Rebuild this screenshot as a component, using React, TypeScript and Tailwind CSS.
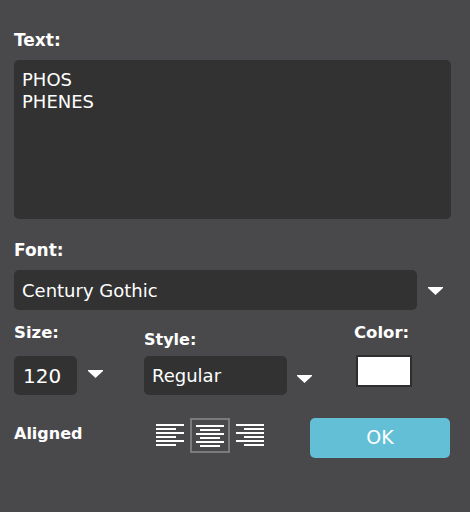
import React from 'react';

// small white dropdown marker used next to selects
function DropArrow() {
  return (
    <svg width="15" height="8" viewBox="0 0 15 8" className="shrink-0">
      <polygon points="0,0 15,0 15,1 7.5,8 0,1" fill="#ffffff" />
    </svg>
  );
}

type Align = 'left' | 'center' | 'right';

function AlignIcon({ align }: { align: Align }) {
  const rows = [0, 1, 2, 3, 4, 5];
  return (
    <svg width="28" height="22" viewBox="0 0 28 22" className="block">
      {rows.map(i => {
        const full = i % 2 === 0;
        const w = full ? 28 : 20;
        const x = full ? 0 : align === 'left' ? 0 : align === 'center' ? 4 : 8;
        return <rect key={i} x={x} y={i * 4} width={w} height={2} fill="#ffffff" />;
      })}
    </svg>
  );
}

export default function App() {
  const label = "font-['DejaVu_Sans',sans-serif] font-bold text-white leading-[20px]";
  const field = "rounded-[5px] bg-[#323232] font-['DejaVu_Sans',sans-serif] text-white";

  return (
    <div className="flex h-[512px] w-[470px] flex-col bg-[#49494b] px-[14px] pt-[30px]">
      <div className={`${label} text-[17px]`}>Text:</div>
      <div className={`${field} mt-[10px] h-[159px] w-[437px] px-[8px] pt-[9px] text-[18px] leading-[22px]`}>
        <div>PHOS</div>
        <div>PHENES</div>
      </div>

      <div className={`${label} mt-[21px] text-[17px]`}>Font:</div>
      <div className="mt-[10px] flex items-center gap-[11px]">
        <div className={`${field} flex h-[40px] w-[403px] items-center px-[8px] text-[18px]`}>Century Gothic</div>
        <div className="mt-[2px]">
          <DropArrow />
        </div>
      </div>

      <div className="mt-[13px] flex">
        <div className="flex w-[130px] flex-col">
          <div className={`${label} text-[16.5px]`}>Size:</div>
          <div className="mt-[13px] flex items-center gap-[11px]">
            <div className={`${field} flex h-[39px] w-[63px] items-center px-[9px] text-[20px]`}>120</div>
            <div className="-mt-[4px]">
              <DropArrow />
            </div>
          </div>
        </div>

        <div className="flex w-[210px] flex-col">
          <div className={`${label} mt-[7px] text-[16px]`}>Style:</div>
          <div className="mt-[6px] flex items-center gap-[10px]">
            <div className={`${field} flex h-[39px] w-[143px] items-center px-[8px] text-[18px]`}>Regular</div>
            <div className="mt-[6px]">
              <DropArrow />
            </div>
          </div>
        </div>

        <div className="flex flex-col">
          <div className={`${label} text-[16.5px]`}>Color:</div>
          <div className="mt-[12px] ml-[2px] h-[32px] w-[56px] border-2 border-[#2e2e2e] bg-white" />
        </div>
      </div>

      <div className="mt-[23px] flex items-start">
        <div className={`${label} mt-[6px] w-[142px] text-[16px]`}>Aligned</div>
        <div className="flex items-start gap-[6px]">
          <div className="mt-[6px]">
            <AlignIcon align="left" />
          </div>
          <div className="flex h-[35px] w-[40px] items-center justify-center border-2 border-[#7b7b7d]">
            <AlignIcon align="center" />
          </div>
          <div className="mt-[6px]">
            <AlignIcon align="right" />
          </div>
        </div>
        <button className="ml-[46px] flex h-[40px] w-[140px] items-center justify-center rounded-[5px] bg-[#63bfd6] pb-[2px] font-['DejaVu_Sans',sans-serif] text-[19px] text-white">
          OK
        </button>
      </div>
    </div>
  );
}
